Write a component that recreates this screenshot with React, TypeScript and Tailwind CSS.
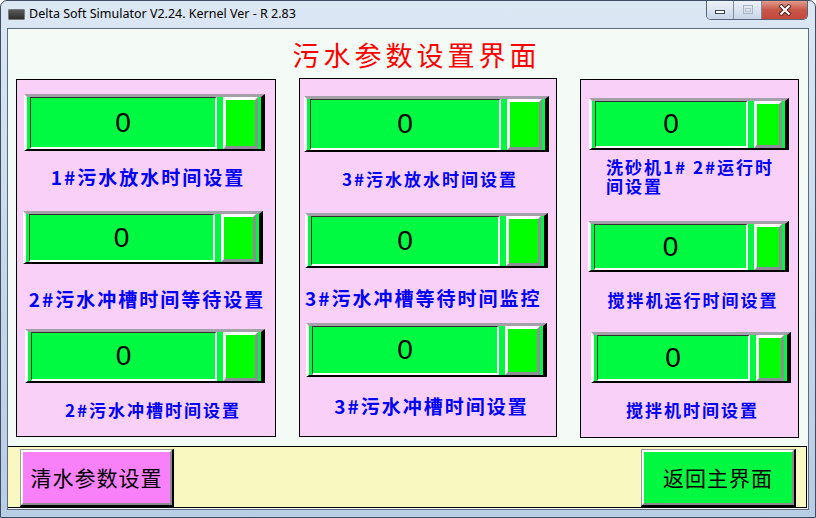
import React from "react";

function Meter({ cls, bw }: { cls: string; bw: string }) {
  return (
    <div
      className={`flex shrink-0 bg-[#00f840] border-t-[3px] border-t-[#a4a1ab] border-l-[3px] border-l-white border-b-2 border-b-black border-r-[4px] border-r-black pl-[3px] pr-[3px] ${cls}`}
    >
      <div className="flex-1 flex items-center justify-center bg-[#00fa42] border-t border-l border-t-[#303030] border-l-[#303030] border-b-2 border-r-2 border-b-white border-r-white font-['Liberation_Sans',sans-serif] text-[28px] leading-none text-black">
        0
      </div>
      <div
        className={`ml-[6px] bg-[#00ff00] border-[3px] border-t-white border-l-white border-b-[#8e8e96] border-r-[#8e8e96] ${bw}`}
      />
    </div>
  );
}

const lblA =
  "h-[24px] flex items-center justify-center whitespace-nowrap font-['Noto_Sans_CJK_SC','Noto_Sans',sans-serif] font-bold text-[#0000f8] text-[19px] tracking-[2px] leading-none";
const lblB =
  "h-[24px] flex items-center justify-center whitespace-nowrap font-['Noto_Sans_CJK_SC','Noto_Sans',sans-serif] font-bold text-[#0000f8] text-[17px] tracking-[2px] leading-none";

export default function App() {
  return (
    <div className="w-[816px] h-[518px] flex flex-col rounded-t-[7px] border border-[#3e4d62] bg-linear-to-b from-[#dce7f4] via-[#c8d8ec] to-[#b9cde5] overflow-hidden">
      {/* Title bar */}
      <div className="h-[27px] flex items-start shrink-0">
        <div className="h-full flex items-center pl-[7px]">
          <div className="w-[17px] h-[11px] rounded-[1px] border border-[#7a7a7a] bg-linear-to-b from-[#5a5a5a] to-[#2e2e2e]" />
          <span className="ml-[4px] font-['Noto_Sans',sans-serif] text-[12.5px] text-black leading-none">
            Delta Soft Simulator V2.24. Kernel Ver - R 2.83
          </span>
        </div>
        <div className="ml-auto mr-[7px] -mt-px flex h-[20px] rounded-b-[5px] border border-t-0 border-[#56657a] overflow-hidden">
          <div className="w-[27px] h-full flex items-center justify-center bg-linear-to-b from-[#eef3f9] to-[#c9d6e7] border-r border-[#7d8ca0]">
            <div className="mt-[5px] w-[10px] h-[4px] bg-white border border-[#3a4658]" />
          </div>
          <div className="w-[28px] h-full flex items-center justify-center bg-linear-to-b from-[#eef3f9] to-[#c9d6e7] border-r border-[#7d8ca0]">
            <div className="w-[10px] h-[9px] border border-[#a8b4c4] flex items-center justify-center">
              <div className="w-[6px] h-[4px] border border-[#b8c2d0]" />
            </div>
          </div>
          <div className="w-[45px] h-full flex items-center justify-center bg-linear-to-b from-[#e3a395] via-[#c9584a] to-[#c4483a]">
            <svg width="14" height="12" viewBox="0 0 14 12">
              <path d="M2 1 L12 11 M12 1 L2 11" stroke="#4a1a16" strokeWidth="4" />
              <path d="M2.5 1.5 L11.5 10.5 M11.5 1.5 L2.5 10.5" stroke="#ffffff" strokeWidth="2.2" />
            </svg>
          </div>
        </div>
      </div>

      {/* Client area */}
      <div className="mx-[6px] w-[802px] h-[482px] border border-[#5c6b80] bg-[#f4faf5] flex flex-col shrink-0">
        <div className="h-[50px] flex items-center justify-center pl-[17px] font-['Noto_Sans_CJK_SC','Noto_Sans',sans-serif] text-[27px] tracking-[4px] text-[#ff0000] leading-none">
          污水参数设置界面
        </div>

        <div className="flex items-start pl-[8px] gap-[23px]">
          {/* Panel 1 */}
          <div className="w-[260px] h-[358px] border border-black bg-[#f8d0f8] flex flex-col">
            <Meter cls="ml-[7px] mt-[14px] w-[241px] h-[57px]" bw="w-[35px]" />
            <div className={`${lblA} mt-[13px] pl-[4px]`}>1#污水放水时间设置</div>
            <Meter cls="ml-[6px] mt-[23px] w-[240px] h-[53px]" bw="w-[35px]" />
            <div className={`${lblA} mt-[22px] pl-[2px]`}>2#污水冲槽时间等待设置</div>
            <Meter cls="ml-[8px] mt-[19px] w-[240px] h-[54px]" bw="w-[35px]" />
            <div className={`${lblB} mt-[14px] pl-[14px]`}>2#污水冲槽时间设置</div>
          </div>

          {/* Panel 2 */}
          <div className="-mt-px w-[258px] h-[359px] border border-black bg-[#f8d0f8] flex flex-col">
            <Meter cls="ml-[4px] mt-[17px] w-[245px] h-[56px]" bw="w-[35px]" />
            <div className={`${lblB} mt-[14px] pl-[4px]`}>3#污水放水时间设置</div>
            <Meter cls="ml-[5px] mt-[23px] w-[243px] h-[55px]" bw="w-[35px]" />
            <div className={`${lblA} mt-[17px] !justify-start pl-[5px]`}>3#污水冲槽等待时间监控</div>
            <Meter cls="ml-[6px] mt-[14px] w-[241px] h-[54px]" bw="w-[35px]" />
            <div className={`${lblA} mt-[16px] pl-[7px]`}>3#污水冲槽时间设置</div>
          </div>

          {/* Panel 3 */}
          <div className="w-[219px] h-[359px] border border-black bg-[#f8d0f8] flex flex-col">
            <Meter cls="ml-[8px] mt-[18px] w-[200px] h-[52px]" bw="w-[28px]" />
            <div className="mt-[7px] ml-[25px] w-[178px] h-[38px] font-['Noto_Sans_CJK_SC','Noto_Sans',sans-serif] font-bold text-[#0000f8] text-[17px] tracking-[2px] leading-[19px]">
              洗砂机1# 2#运行时间设置
            </div>
            <Meter cls="ml-[7px] mt-[26px] w-[201px] h-[51px]" bw="w-[28px]" />
            <div className={`${lblB} mt-[15px] pl-[7px]`}>搅拌机运行时间设置</div>
            <Meter cls="ml-[10px] mt-[21px] w-[200px] h-[51px]" bw="w-[28px]" />
            <div className={`${lblB} mt-[14px] pl-[6px]`}>搅拌机时间设置</div>
          </div>
        </div>

        {/* Bottom bar */}
        <div className="mt-[8px] w-[799px] h-[62px] border-t border-b border-r border-black bg-[#f8f8c0] flex items-start justify-between pt-[2px] pl-[12px] pr-[10px]">
          <div className="w-[154px] h-[58px] border-t border-l border-t-[#9a9a9a] border-l-[#9a9a9a] border-b-2 border-r-2 border-b-black border-r-black">
            <div className="h-full border-2 border-t-white border-l-white border-b-[#8c8c8c] border-r-[#8c8c8c] bg-[#f880f8] flex items-center justify-center font-['Noto_Sans_CJK_SC','Noto_Sans',sans-serif] text-[21px] tracking-[1px] text-black leading-none">
              清水参数设置
            </div>
          </div>
          <div className="w-[155px] h-[58px] border-t border-l border-t-[#9a9a9a] border-l-[#9a9a9a] border-b-2 border-r-2 border-b-black border-r-black">
            <div className="h-full border-2 border-t-white border-l-white border-b-[#8c8c8c] border-r-[#8c8c8c] bg-[#00f840] flex items-center justify-center font-['Noto_Sans_CJK_SC','Noto_Sans',sans-serif] text-[21px] tracking-[1px] text-black leading-none">
              返回主界面
            </div>
          </div>
        </div>
      </div>
    </div>
  );
}
